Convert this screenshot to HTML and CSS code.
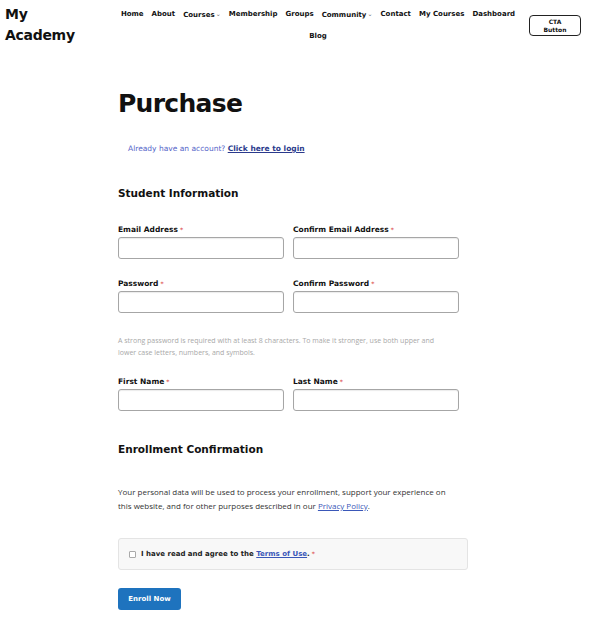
FILE: index.html
```html
<!DOCTYPE html>
<html lang="en">
<head>
    <meta charset="UTF-8">
    <title>Purchase - My Academy</title>
    <link rel="stylesheet" href="styles.css">
</head>
<body>
    <header class="site-header">
        <div class="logo">My<br>Academy</div>
        <nav class="main-nav">
            <a href="#">Home</a>
            <a href="#">About</a>
            <a href="#">Courses<span class="caret">&#8964;</span></a>
            <a href="#">Membership</a>
            <a href="#">Groups</a>
            <a href="#">Community<span class="caret">&#8964;</span></a>
            <a href="#">Contact</a>
            <a href="#">My Courses</a>
            <a href="#">Dashboard</a>
            <a href="#">Blog</a>
        </nav>
        <a class="cta" href="#">CTA<br>Button</a>
    </header>

    <main class="container">
        <h1>Purchase</h1>
        <p class="login-note">Already have an account? <a href="#">Click here to login</a></p>

        <h2>Student Information</h2>
        <div class="field-row">
            <div class="field">
                <label>Email Address<span class="req">*</span></label>
                <input type="email">
            </div>
            <div class="field">
                <label>Confirm Email Address<span class="req">*</span></label>
                <input type="email">
            </div>
        </div>
        <div class="field-row">
            <div class="field">
                <label>Password<span class="req">*</span></label>
                <input type="password">
            </div>
            <div class="field">
                <label>Confirm Password<span class="req">*</span></label>
                <input type="password">
            </div>
        </div>
        <p class="hint">A strong password is required with at least 8 characters. To make it stronger, use both upper and lower case letters, numbers, and symbols.</p>
        <div class="field-row">
            <div class="field">
                <label>First Name<span class="req">*</span></label>
                <input type="text">
            </div>
            <div class="field">
                <label>Last Name<span class="req">*</span></label>
                <input type="text">
            </div>
        </div>

        <h2 class="section-two">Enrollment Confirmation</h2>
        <p class="privacy">Your personal data will be used to process your enrollment, support your experience on this website, and for other purposes described in our <a href="#">Privacy Policy</a>.</p>

        <div class="terms">
            <span class="check-box"></span>
            <span class="terms-text">I have read and agree to the <a href="#">Terms of Use</a>.<span class="req">*</span></span>
        </div>

        <button class="enroll">Enroll Now</button>
    </main>
</body>
</html>
```

FILE: styles.css
```css
/* base */
body {
    margin: 0;
    background-color: #ffffff;
    color: #111;
    font-family: "DejaVu Sans", sans-serif;
}
a {
    color: inherit;
    text-decoration: none;
}

/* header */
.site-header {
    display: flex;
    align-items: flex-start;
    padding: 4px 13px 0 5px;
}
.logo {
    width: 90px;
    font-size: 14px;
    font-weight: bold;
    line-height: 21px;
    letter-spacing: -0.3px;
}
.main-nav {
    flex: 1;
    display: flex;
    flex-wrap: wrap;
    justify-content: center;
    column-gap: 8px;
    padding: 0 8px 0 20px;
}
.main-nav a {
    font-size: 7px;
    font-weight: bold;
    line-height: 21px;
}
.caret {
    font-size: 6px;
    color: #777;
    margin-left: 1px;
    position: relative;
    top: -1px;
}
.cta {
    margin-top: 11px;
    width: 50px;
    padding: 2px 0;
    border: 1px solid #222;
    border-radius: 4px;
    font-size: 6px;
    font-weight: bold;
    line-height: 7.5px;
    text-align: center;
}

/* content */
.container {
    width: 358px;
    margin: 41px auto 40px;
}
h1 {
    margin: 0;
    font-size: 25px;
    line-height: 31px;
    letter-spacing: -0.7px;
}
.login-note {
    margin: 24px 0 0 10px;
    font-size: 7.5px;
    line-height: 12px;
    color: #5565c9;
}
.login-note a {
    color: #2b3a8c;
    font-weight: bold;
    text-decoration: underline;
}
h2 {
    margin: 31px 0 24px;
    font-size: 10.5px;
    line-height: 14px;
}
.field-row {
    display: grid;
    grid-template-columns: 166px 166px;
    column-gap: 9px;
    margin-bottom: 19px;
}
.field label {
    display: block;
    font-size: 7.5px;
    font-weight: bold;
    line-height: 12px;
    margin-bottom: 1px;
}
.req {
    color: #e05a5a;
    font-size: 6px;
    margin-left: 2px;
    vertical-align: top;
}
.field input {
    display: block;
    width: 100%;
    height: 22px;
    box-sizing: border-box;
    border: 1px solid #a6a6a6;
    border-radius: 3px;
    box-shadow: inset 0 1px 1px rgba(0, 0, 0, 0.08);
}
.hint {
    margin: 22px 0 17px;
    width: 335px;
    font-family: "Open Sans", sans-serif;
    font-size: 7px;
    line-height: 12px;
    color: #a8a8a8;
}
h2.section-two {
    margin: 31px 0 29px;
}
.privacy {
    margin: 0;
    width: 336px;
    font-family: "Open Sans", sans-serif;
    font-size: 8px;
    line-height: 14px;
    color: #333;
}
.privacy a {
    color: #3a57b8;
    text-decoration: underline;
}
.terms {
    margin-top: 25px;
    width: 350px;
    height: 32px;
    box-sizing: border-box;
    padding: 0 10px;
    display: flex;
    align-items: center;
    background-color: #f8f8f8;
    border: 1px solid #e4e4e4;
    border-radius: 3px;
}
.check-box {
    width: 5px;
    height: 5px;
    margin-right: 5px;
    border: 1px solid #aaa;
    border-radius: 1px;
    background-color: #fff;
}
.terms-text {
    font-size: 7px;
    font-weight: bold;
    color: #222;
}
.terms a {
    color: #3a57b8;
    text-decoration: underline;
}
.enroll {
    display: block;
    margin-top: 18px;
    width: 63px;
    height: 22px;
    padding: 0;
    background-color: #1e73be;
    color: #fff;
    border: none;
    border-radius: 3px;
    font-family: "DejaVu Sans", sans-serif;
    font-size: 7px;
    font-weight: bold;
    cursor: pointer;
}
```
